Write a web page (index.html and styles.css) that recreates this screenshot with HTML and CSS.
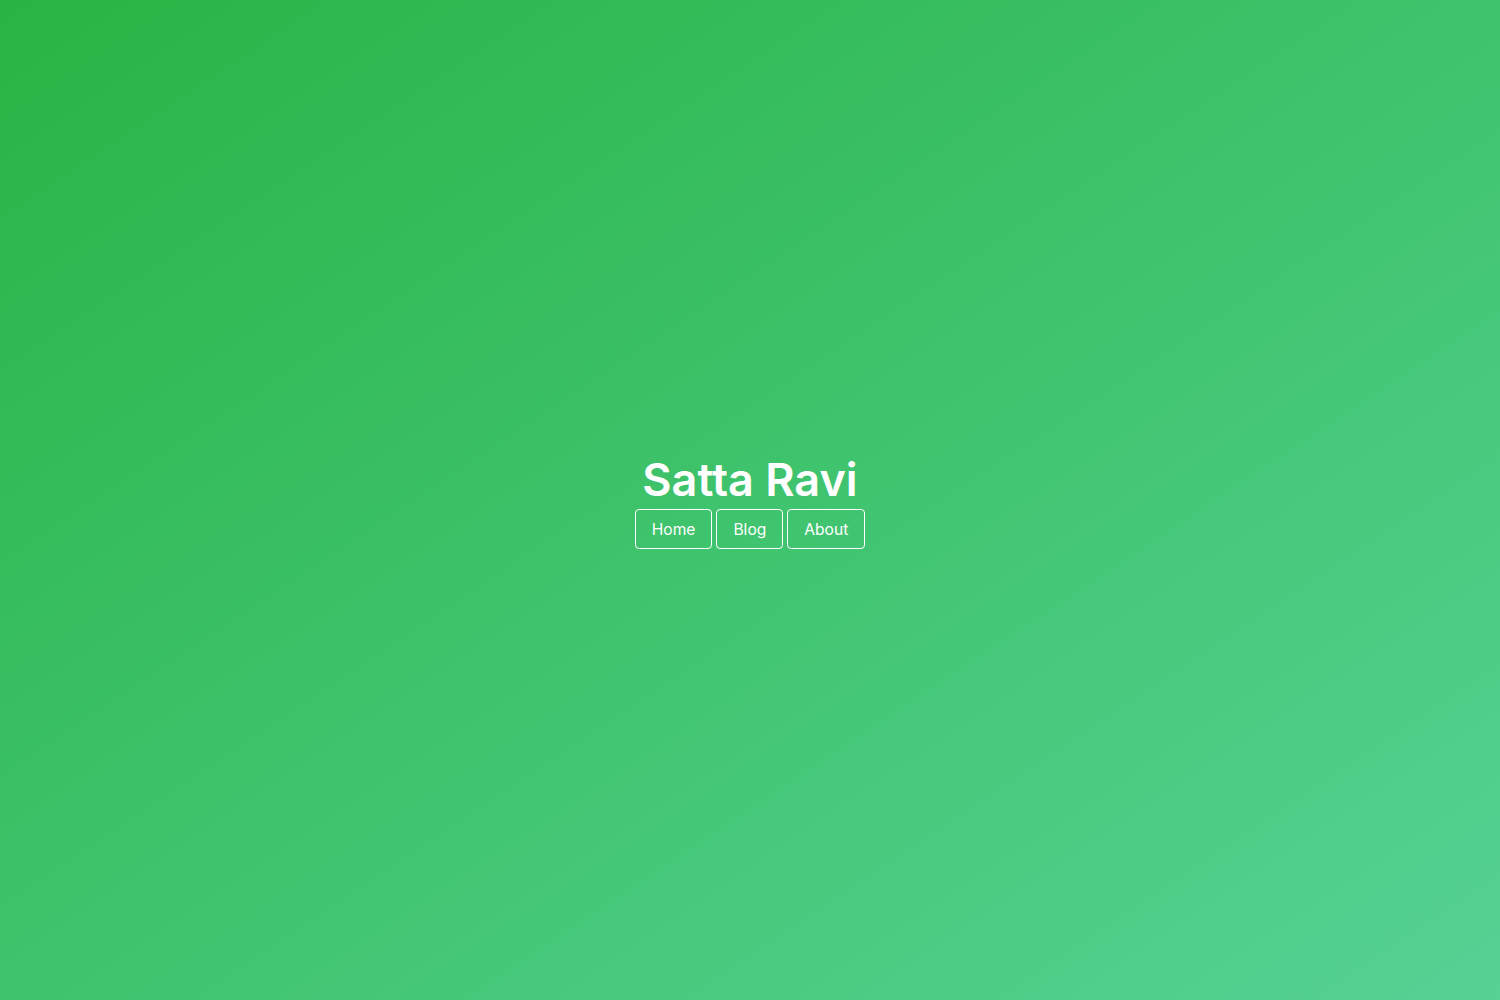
FILE: index.html
```html
<!DOCTYPE html>
<html>
<head>
<meta charset="utf-8">
<link rel="stylesheet" href="styles.css">
</head>
<body>
<main class="hero">
  <h1 class="title">Satta Ravi</h1>
  <nav class="nav">
    <a class="btn" href="#">Home</a>
    <a class="btn" href="#">Blog</a>
    <a class="btn" href="#">About</a>
  </nav>
</main>
</body>
</html>
```
FILE: styles.css
```css
html, body {
  margin: 0;
  height: 100%;
}
body {
  font-family: Inter, "Noto Sans", sans-serif;
  color: #fff;
  background: linear-gradient(to bottom right, #28b445, #56d295);
}
.hero {
  height: 100%;
  display: flex;
  flex-direction: column;
  align-items: center;
  justify-content: center;
}
.title {
  margin: 0;
  font-size: 45px;
  font-weight: 600;
  line-height: 57px;
}
.nav {
  display: flex;
  gap: 4px;
  margin-top: 1px;
}
.btn {
  color: #fff;
  text-decoration: none;
  font-size: 15.6px;
  line-height: 37px;
  padding: 1px 16px 0;
  border: 1px solid #fff;
  border-radius: 4px;
}
```
